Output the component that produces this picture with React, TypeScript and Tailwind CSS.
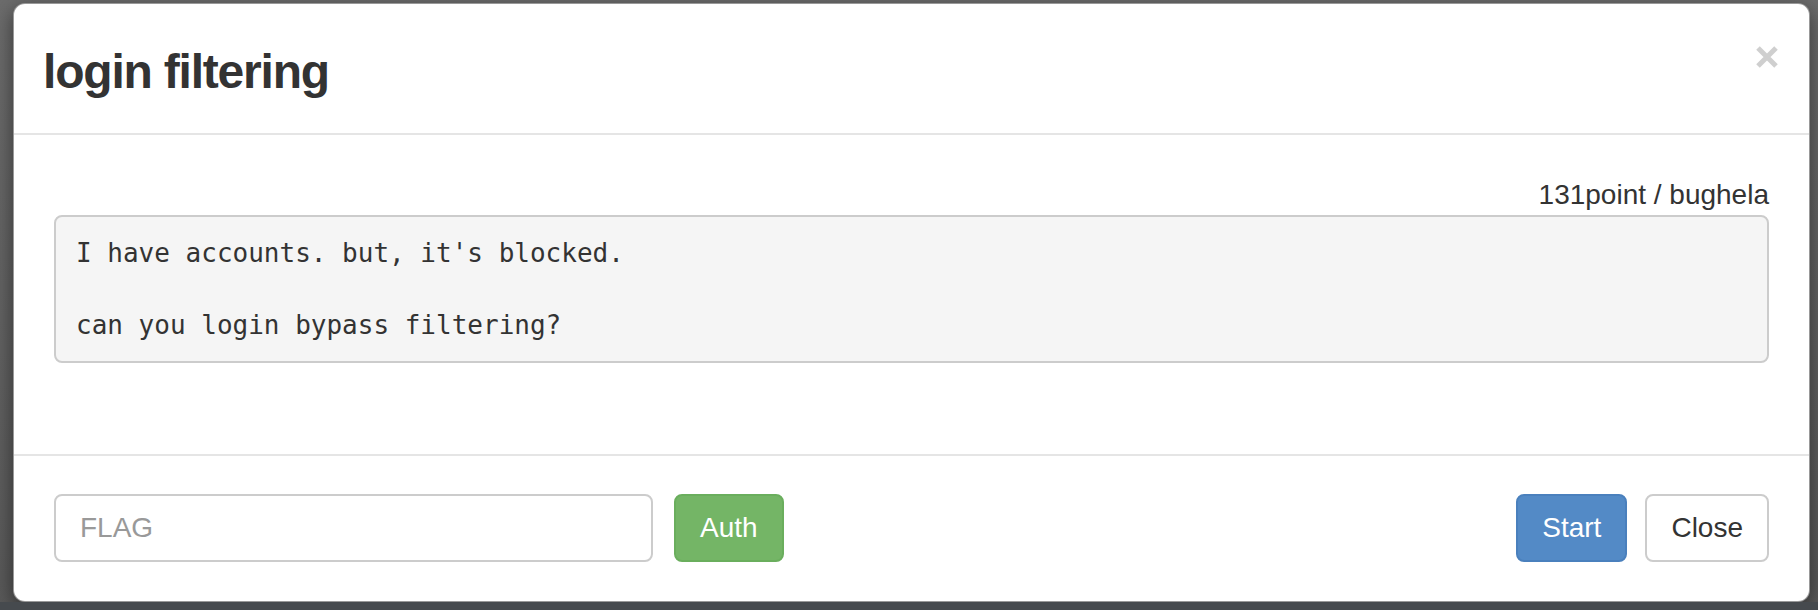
import React from 'react';

const sans = "font-['Liberation_Sans',Arial,sans-serif]";

const CloseIcon: React.FC = () => (
  <svg width="24" height="24" viewBox="0 0 24 24" className="block">
    <path d="M3 3 L21 21 M21 3 L3 21" stroke="#cfcfcf" strokeWidth="5" strokeLinecap="butt" />
  </svg>
);

const App: React.FC = () => {
  return (
    <div className={`w-[1818px] h-[610px] overflow-hidden flex flex-col bg-gradient-to-b from-[#6c6c6c] to-[#595959] ${sans}`}>
      <div className="pl-[13px] pt-[3px]">
        {/* Modal */}
        <div className="w-[1797px] h-[599px] bg-white rounded-[12px] border border-black/40 shadow-[0_6px_20px_rgba(0,0,0,0.5)] flex flex-col overflow-hidden">
          {/* Header */}
          <div className="h-[131px] border-b-2 border-[#e5e5e5] flex items-start justify-between pl-[29px] pr-[30px]">
            <h4 className="mt-[35px] text-[48px] leading-[66px] font-bold tracking-[-0.025em] text-[#333]">login filtering</h4>
            <button className="mt-[41px] cursor-pointer">
              <CloseIcon />
            </button>
          </div>

          {/* Body */}
          <div className="px-[40px] pt-[40px] pb-[91px]">
            <p className="text-right text-[28px] leading-[40px] text-[#333]">131point / bughela</p>
            <pre className="bg-[#f5f5f5] border-2 border-[#cccccc] rounded-[8px] px-[20px] py-[18px] text-[26px] leading-[36px] text-[#333] font-['DejaVu_Sans_Mono',monospace] whitespace-pre">
{`I have accounts. but, it's blocked.

can you login bypass filtering?`}
            </pre>
          </div>

          {/* Footer */}
          <div className="flex-1 border-t-2 border-[#e5e5e5] px-[40px] pt-[38px] flex items-start">
            <input
              type="text"
              placeholder="FLAG"
              className="w-[599px] h-[68px] border-2 border-[#cccccc] rounded-[8px] px-[24px] text-[28px] text-[#555] placeholder:text-[#999] outline-none"
            />
            <button className="ml-[21px] h-[68px] px-[24px] rounded-[8px] border-2 border-[#6aae5d] bg-[#74b566] text-white text-[28px] leading-[40px]">
              Auth
            </button>
            <div className="ml-auto flex gap-[18px]">
              <button className="h-[68px] px-[24px] rounded-[8px] border-2 border-[#4a80bd] bg-[#538ac6] text-white text-[28px] leading-[40px]">
                Start
              </button>
              <button className="h-[68px] px-[24px] rounded-[8px] border-2 border-[#cccccc] bg-white text-[#333] text-[28px] leading-[40px]">
                Close
              </button>
            </div>
          </div>
        </div>
      </div>
      <div className="flex-1 bg-[#464a4e]" />
    </div>
  );
};

export default App;
